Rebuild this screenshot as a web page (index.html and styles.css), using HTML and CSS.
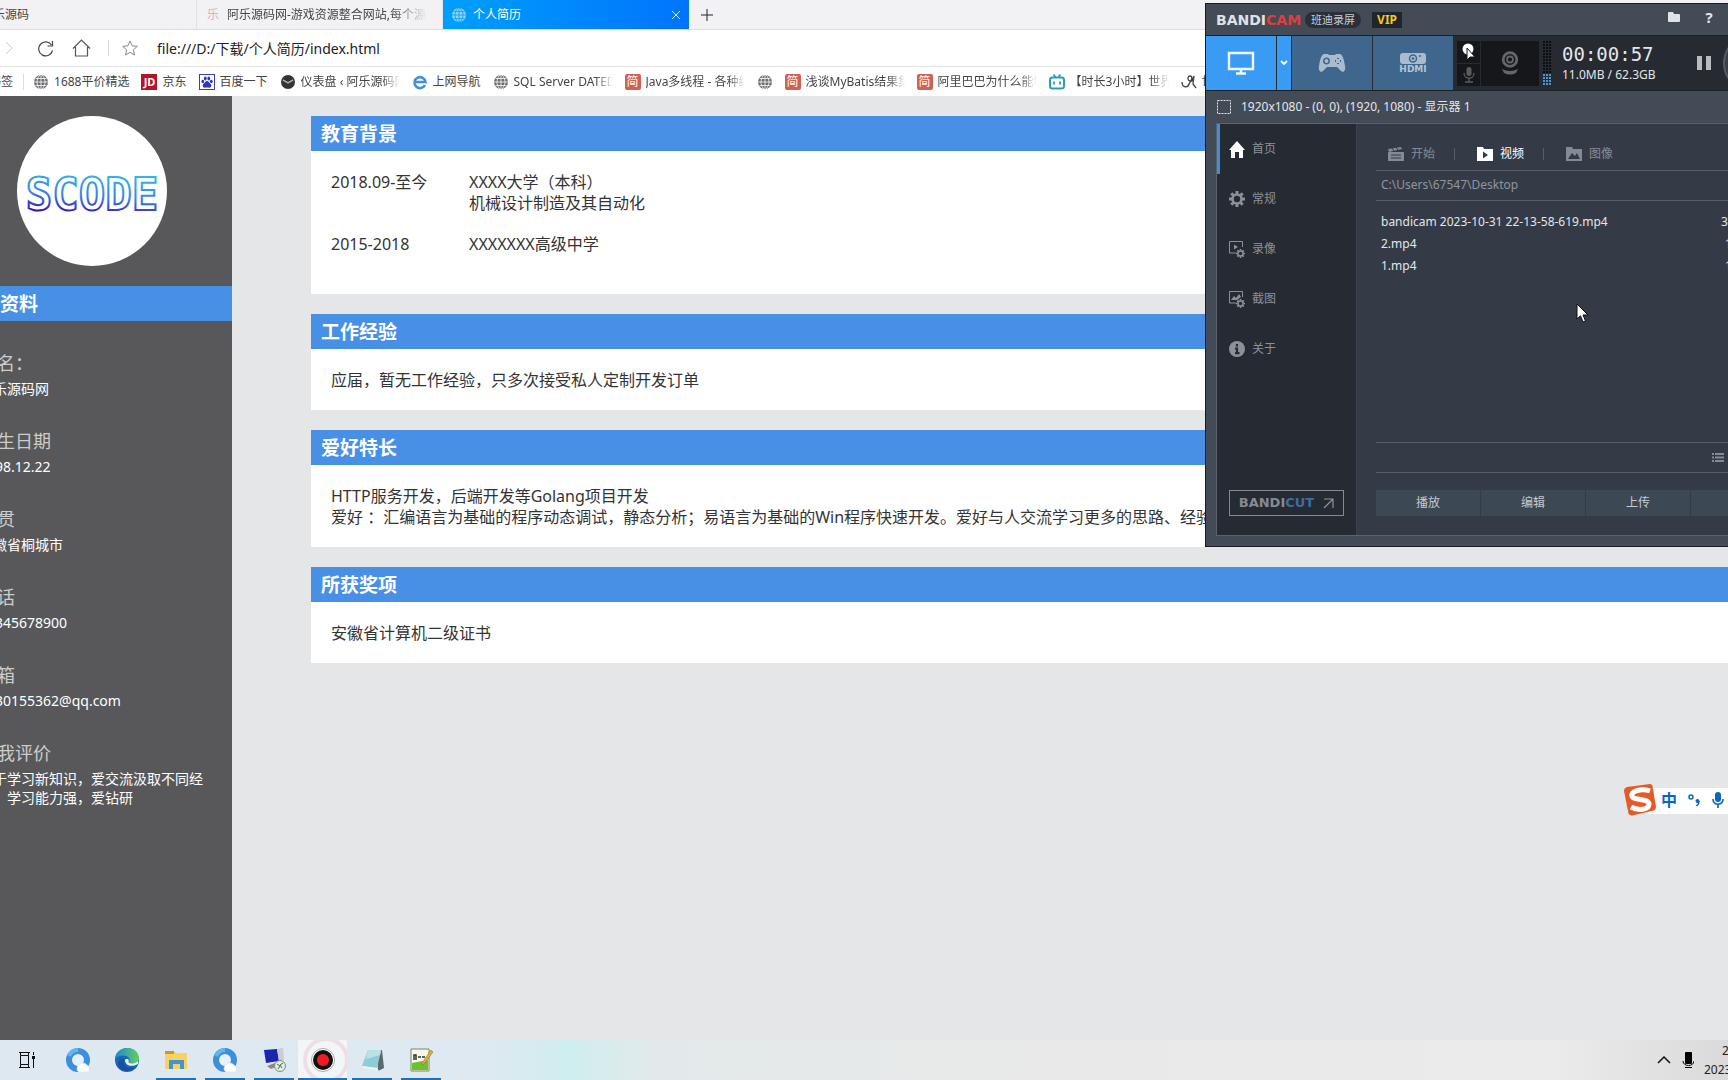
FILE: index.html
```html
<!DOCTYPE html>
<html lang="zh-CN">
<head>
<meta charset="utf-8">
<title>个人简历</title>
<link rel="stylesheet" href="styles.css">
</head>
<body>
<svg class="defs" width="0" height="0" aria-hidden="true">
  <defs>
    <symbol id="globe" viewBox="0 0 16 16"><circle cx="8" cy="8" r="7" fill="currentColor"/><path d="M8 1v14M1 8h14M2.500 4.500h11M2.500 11.500h11M7 1c-4 4-4 10 0 14M9 1c4 4 4 10 0 14" fill="none" stroke="var(--line,#fff)" stroke-width=".8"/></symbol>
    <symbol id="qq" viewBox="0 0 24 24"><circle cx="12" cy="12" r="9" fill="#e8f1fa" stroke="#3c8fdc" stroke-width="6"/><path d="M3 8a10 10 0 0 1 9-6" stroke="#62b6f2" stroke-width="4" fill="none"/><path d="M13 24a4 4 0 0 1 0-7 5 5 0 0 1 8 0 4 4 0 0 1 1 7z" fill="#fff" stroke="#cfe0f0" stroke-width=".6"/></symbol>
    <symbol id="gear" viewBox="0 0 16 16"><circle cx="8" cy="8" r="4.500" fill="none" stroke="currentColor" stroke-width="2.600"/><path d="M8 0v3M8 13v3M0 8h3M13 8h3M2.300 2.300l2.200 2.200M11.500 11.500l2.200 2.200M13.700 2.300l-2.200 2.200M4.500 11.500l-2.200 2.200" stroke="currentColor" stroke-width="3"/></symbol>
  </defs>
</svg>

<header class="browser">
  <nav class="tabs">
    <a class="tab" href="#"><span class="tab-icon"></span><span class="tab-title">阿乐源码</span></a>
    <a class="tab" href="#"><span class="tab-icon le">乐</span><span class="tab-title fade">阿乐源码网-游戏资源整合网站,每个源码</span></a>
    <a class="tab active" href="#"><svg class="tab-icon pale" width="16" height="16"><use href="#globe"/></svg><span class="tab-title">个人简历</span>
      <svg class="close" width="10" height="10" viewBox="0 0 10 10"><path d="M1 1l8 8M9 1l-8 8" stroke="#d8eeff" fill="none"/></svg></a>
    <button class="plain new-tab" aria-label="新建标签页"><svg width="12" height="12" viewBox="0 0 12 12"><path d="M6 0v12M0 6h12" stroke="#222"/></svg></button>
  </nav>
  <div class="address">
    <button class="plain nav-fwd" aria-label="前进"><svg width="9" height="14" viewBox="0 0 9 14"><path d="M1 1l6 6-6 6" fill="none" stroke="#ccc"/></svg></button>
    <button class="plain nav-reload" aria-label="刷新"><svg width="17" height="17" viewBox="0 0 17 17"><path d="M15.500 10.500A7 7 0 1 1 14.500 5" fill="none" stroke="#444" stroke-width="1.200"/><path d="M15.500 1v5h-5" fill="none" stroke="#444" stroke-width="1.200"/></svg></button>
    <button class="plain nav-home" aria-label="主页"><svg width="19" height="18" viewBox="0 0 19 18"><path d="M1 9.500L9.500 1 18 9.500M3.500 8v9h12V8" fill="none" stroke="#555" stroke-width="1.200"/></svg></button>
    <span class="rule"></span>
    <button class="plain nav-star" aria-label="收藏"><svg width="16" height="16" viewBox="0 0 16 16"><path d="M8 1l2.100 4.800 5.200.5-3.900 3.500 1.100 5.200L8 12.300 3.500 15l1.100-5.200L.7 6.300l5.200-.5z" fill="none" stroke="#888"/></svg></button>
    <input class="url" aria-label="地址" value="file:///D:/下载/个人简历/index.html">
  </div>
  <nav class="bookmarks">
    <a class="clipped" href="#">书签</a><span class="rule"></span>
    <a href="#"><svg class="grey" width="16" height="16"><use href="#globe"/></svg><span>1688平价精选</span></a>
    <a href="#"><span class="jd">JD</span><span>京东</span></a>
    <a href="#"><svg width="16" height="16" viewBox="0 0 16 16"><rect x=".5" y=".5" width="15" height="15" fill="#fff" stroke="#3a3fb8"/><g fill="#2e35c4"><ellipse cx="3.800" cy="7.500" rx="1.400" ry="1.800"/><ellipse cx="6.300" cy="4.500" rx="1.400" ry="1.900"/><ellipse cx="9.800" cy="4.500" rx="1.400" ry="1.900"/><ellipse cx="12.300" cy="7.500" rx="1.400" ry="1.800"/><path d="M8 7c1.500 0 2 1.500 3.200 2.500 2 1.800 1 4.500-1.200 4.200-1.300-.3-2.700-.3-4 0-2.200.3-3.200-2.400-1.200-4.200C6 8.500 6.500 7 8 7z"/></g></svg><span>百度一下</span></a>
    <a href="#"><svg width="16" height="16" viewBox="0 0 16 16"><circle cx="8" cy="8" r="7" fill="#333"/><path d="M3 6l5 3 5-3" stroke="#aaa" stroke-width="1.500" fill="none"/></svg><span class="fade">仪表盘 ‹ 阿乐源码网站</span></a>
    <a href="#"><svg width="16" height="16" viewBox="0 0 16 16"><path d="M13 11a5.500 5.500 0 1 1 .5-3H4" fill="none" stroke="#3f92d8" stroke-width="2.600"/></svg><span>上网导航</span></a>
    <a href="#"><svg class="grey" width="16" height="16"><use href="#globe"/></svg><span class="fade">SQL Server DATEDIFF</span></a>
    <a href="#"><span class="jian">简</span><span class="fade">Java多线程 - 各种线程</span></a>
    <a href="#" aria-label="书签"><svg class="grey" width="16" height="16"><use href="#globe"/></svg></a>
    <a href="#"><span class="jian">简</span><span class="fade">浅谈MyBatis结果集映射</span></a>
    <a href="#"><span class="jian">简</span><span class="fade">阿里巴巴为什么能够</span></a>
    <a href="#"><svg width="16" height="16" viewBox="0 0 16 16"><rect x="1" y="3.500" width="14" height="11" rx="2.500" fill="none" stroke="#2a9fb5" stroke-width="2"/><path d="M4.500.5l2 2.500M11.500.5l-2 2.500M5 7.500v3M11 7.500v3" stroke="#2a9fb5" stroke-width="1.800"/></svg><span class="fade">【时长3小时】世界上最</span></a>
    <a href="#"><svg width="16" height="16" viewBox="0 0 16 16"><path d="M1 8c0 6 6 6 7 2 3-4 4-8 1-8s-3 6 2 5l2-5-1 8 3 4" fill="none" stroke="#444" stroke-width="1.300"/></svg><span class="fade">世界</span></a>
  </nav>
</header>

<div class="page">
  <aside class="profile">
    <svg class="avatar" width="150" height="150" viewBox="0 0 150 150" role="img" aria-label="SCODE">
      <defs><linearGradient id="ink" x1=".6" y1="0" x2=".4" y2="1"><stop offset=".1" stop-color="#2fb8ee"/><stop offset=".55" stop-color="#3a7fe0"/><stop offset=".9" stop-color="#3212b8"/></linearGradient></defs>
      <circle cx="75" cy="75" r="75" fill="#fff"/>
      <text class="scode" x="75" y="94" text-anchor="middle" fill="#fff" stroke="url(#ink)" stroke-width="2">SCODE</text>
    </svg>
    <h3>个人资料</h3>
    <dl>
      <dt>姓名：</dt><dd>阿乐源码网</dd>
      <dt>出生日期</dt><dd>1998.12.22</dd>
      <dt>籍贯</dt><dd>安徽省桐城市</dd>
      <dt>电话</dt><dd>12345678900</dd>
      <dt>邮箱</dt><dd>2330155362@qq.com</dd>
      <dt>自我评价</dt><dd>善于学习新知识，爱交流汲取不同经<br>验，学习能力强，爱钻研</dd>
    </dl>
  </aside>
  <main class="resume">
    <section><h3>教育背景</h3>
      <div class="card-body schools">
        <span>2018.09-至今</span><p>XXXX大学（本科）<br>机械设计制造及其自动化</p>
        <span>2015-2018</span><p>XXXXXXX高级中学</p>
      </div></section>
    <section><h3>工作经验</h3><div class="card-body"><p>应届，暂无工作经验，只多次接受私人定制开发订单</p></div></section>
    <section><h3>爱好特长</h3><div class="card-body"><p>HTTP服务开发，后端开发等Golang项目开发<br>爱好 ：汇编语言为基础的程序动态调试，静态分析；易语言为基础的Win程序快速开发。爱好与人交流学习更多的思路、经验</p></div></section>
    <section><h3>所获奖项</h3><div class="card-body"><p>安徽省计算机二级证书</p></div></section>
  </main>
</div>

<footer class="taskbar">
  <button class="plain task-view" aria-label="任务视图"><svg width="18" height="16" viewBox="0 0 18 16"><path d="M1 .5h11M1 15.500h11M2.500 0v3.500h8V0M2.500 16v-3.500h8V16M2.500 3.500v9M10.500 3.500v9M15.500 0v3M15.500 7v9" fill="none" stroke="#111" stroke-width="1"/><rect x="14" y="4" width="3" height="3" fill="#111"/></svg></button>
  <button class="plain app" aria-label="QQ浏览器"><svg width="24" height="24"><use href="#qq"/></svg></button>
  <button class="plain app" aria-label="Edge"><svg width="24" height="24" viewBox="0 0 24 24"><defs><linearGradient id="edge"><stop stop-color="#1c86d6"/><stop offset="1" stop-color="#5fd35a"/></linearGradient></defs><circle cx="12" cy="12" r="12" fill="#1668b8"/><path d="M0 11C1-3 23-4 24 10c0 5-5 6-8 5-4-1 0-2-2-5-3-4-11-3-14 1z" fill="url(#edge)"/><path d="M9 11c-2 6 4 11 11 8-3 4-9 5-13 3-6-4-5-12 2-11z" fill="#1c4f9c"/><path d="M10 12c0 5 6 8 13 4V13c-2 2-6 3-8 2-3-1 0-2-2-4-2 0-3 0-3 1z" fill="#e6f1f6"/></svg></button>
  <button class="plain app open" aria-label="文件资源管理器"><svg width="24" height="24" viewBox="0 0 24 24"><path d="M1 3h9l2 2h11v16H1z" fill="#f8d262"/><path d="M1 3h9v3H1z" fill="#c69a2c"/><path d="M5 21v-9h15v9h-4v-5H9v5z" fill="#4394d2"/></svg></button>
  <button class="plain app open" aria-label="QQ浏览器"><svg width="24" height="24"><use href="#qq"/></svg></button>
  <button class="plain app open" aria-label="远程桌面"><svg width="24" height="24" viewBox="0 0 24 24"><path d="M2 2l13-1 2 12-13 2z" fill="#1a25b0"/><path d="M15 1l6-1 1 12-5 1z" fill="#c9cdd6"/><path d="M5 18l8-3 3 3-7 3z" fill="#888"/><circle cx="18" cy="18" r="5.500" fill="#e5ebe3" stroke="#7f8b80"/><path d="M15 16l3 2-2 3M21 15l-3 2 2 3" fill="none" stroke="#397a45"/></svg></button>
  <button class="plain app open current" aria-label="Bandicam"><svg width="48" height="48" viewBox="0 0 48 48"><circle cx="27" cy="24" r="21" fill="none" stroke="#e9a9b2" stroke-width="4" opacity=".3"/><circle cx="24" cy="24" r="11.500" fill="#fff" stroke="#aaa"/><circle cx="24" cy="24" r="10" fill="#111"/><circle cx="24" cy="24" r="6" fill="#ee1c25"/></svg></button>
  <button class="plain app open" aria-label="记事本"><svg width="24" height="24" viewBox="0 0 24 24"><path d="M17 4l5-2 2 18-6 3z" fill="#59696e"/><path d="M8 2l13 1-4 17-15-2z" fill="#8fccd6"/><path d="M8 2l13 1-1 4-14 4z" fill="#b9e2e8"/><path d="M2 18l15 2 2 3-16-3z" fill="#e9f3f4"/></svg></button>
  <button class="plain app open" aria-label="Notepad++"><svg width="24" height="24" viewBox="0 0 24 24"><path d="M2 1h18v22H2z" fill="#f6f7ea" stroke="#7b8a50"/><path d="M3 15l16-3v10H3z" fill="#6cc132"/><path d="M5 12V7h2v5M9 9h3M13 9h3" stroke="#333" stroke-width="1.500" fill="none"/><path d="M22 2l2 2-9 12-2 1v-2z" fill="#e2ad35" stroke="#8b6a28" stroke-width=".5"/></svg></button>
  <div class="tray">
    <svg width="14" height="8" viewBox="0 0 14 8"><path d="M1 7l6-6 6 6" fill="none" stroke="#111" stroke-width="1.500"/></svg>
    <svg width="12" height="16" viewBox="0 0 12 16"><rect x="3" width="7" height="12" rx="1" fill="#000"/><path d="M1 9c0 6 11 6 11 0M3 15.500h7" fill="none" stroke="#000"/></svg>
    <div class="clock"><span>2</span><span>2023</span></div>
  </div>
</footer>

<section class="recorder" aria-label="Bandicam">
  <header class="rec-title">
    <strong class="brand">BANDI<em>CAM</em></strong><span class="pill">班迪录屏</span><span class="vip">VIP</span>
    <button class="plain rec-folder" aria-label="打开文件夹"><svg width="12" height="10" viewBox="0 0 12 10"><path d="M0 1q0-1 1-1h4l1 2h5q1 0 1 1v6q0 1-1 1H1q-1 0-1-1z" fill="#dfe3e8"/></svg></button>
    <button class="plain rec-help">?</button>
  </header>
  <div class="rec-tools">
    <button class="plain mode on wide-a" aria-label="屏幕"><svg width="28" height="24" viewBox="0 0 28 24"><path d="M2 2h24v16H2z" fill="none" stroke="#f2fbff" stroke-width="2.400"/><path d="M14 18v4M9 22.500h10" stroke="#f2fbff" stroke-width="2.500"/></svg></button>
    <button class="plain mode on narrow" aria-label="更多"><svg width="8" height="6" viewBox="0 0 8 6"><path d="M1 1l3 3 3-3" fill="none" stroke="#fff" stroke-width="1.800"/></svg></button>
    <button class="plain mode" aria-label="游戏"><svg width="28" height="20" viewBox="0 0 28 20"><path d="M6 1h4l1 1h6l1-1h4c3 1 4 6 5 12 1 5-2 7-4 5l-4-4H9l-4 4c-2 2-5 0-4-5C2 7 3 2 6 1z" fill="#a9bccd"/><circle cx="8.500" cy="8" r="2.700" fill="none" stroke="#3f678d" stroke-width="1.500"/><path d="M20 5v1M20 10v1M17 8h1M22 8h1" stroke="#3f678d" stroke-width="2"/></svg></button>
    <button class="plain mode hdmi"><svg width="26" height="12" viewBox="0 0 26 12"><rect width="26" height="11" rx="3" fill="#a9bccd"/><circle cx="13" cy="5.500" r="3.500" fill="none" stroke="#3f678d" stroke-width="1.500"/><circle cx="13" cy="5.500" r="1.300" fill="#3f678d"/><circle cx="20" cy="3" r="1" fill="#3f678d"/></svg><span>HDMI</span></button>
    <div class="mini">
      <button class="plain" aria-label="鼠标"><svg width="14" height="18" viewBox="0 0 14 18"><circle cx="6" cy="6" r="5.500" fill="#fff"/><path d="M5 5v12l3-3h5z" fill="#fff" stroke="#15171a"/></svg></button>
      <button class="plain" aria-label="麦克风"><svg width="12" height="16" viewBox="0 0 12 16"><rect x="3.500" width="5" height="9" rx="2.500" fill="#5a5d61"/><path d="M1 6c0 7 10 7 10 0M6 11v4M2 15h8" fill="none" stroke="#5a5d61" stroke-width="1.300"/></svg></button>
    </div>
    <button class="plain webcam" aria-label="摄像头"><svg width="18" height="24" viewBox="0 0 18 24"><circle cx="9" cy="8.500" r="6.800" fill="none" stroke="#63666a" stroke-width="2.800"/><circle cx="9" cy="8.500" r="3" fill="none" stroke="#63666a" stroke-width="1.800"/><path d="M1 18q8 4 16 0l-2 4q-6 3-12 0z" fill="#63666a"/></svg></button>
    <div class="meter"></div>
    <div class="times"><time>00:00:57</time><span>11.0MB / 62.3GB</span></div>
    <button class="plain pause" aria-label="暂停"><svg width="14" height="14" viewBox="0 0 14 14"><path d="M0 0h5v14H0zM9 0h5v14H9z" fill="#b9bdc2"/></svg></button>
    <svg class="stop" width="6" height="44" viewBox="0 0 6 44"><circle cx="30" cy="22" r="28" fill="#3a3e45" stroke="#555b64" stroke-width="2"/></svg>
  </div>
  <div class="rec-target"><svg width="14" height="14" viewBox="0 0 14 14"><path d="M.5.5h13v13H.5z" fill="none" stroke="#e3e6ea" stroke-dasharray="2 1"/></svg><span>1920x1080 - (0, 0), (1920, 1080) - 显示器 1</span></div>
  <div class="rec-body">
    <nav class="rec-nav">
      <a class="on" href="#"><svg width="16" height="17" viewBox="0 0 16 17"><path d="M8 0l8 9h-2v8h-4v-6H6v6H2V9H0z" fill="#fff"/></svg>首页</a>
      <a href="#"><svg width="16" height="16"><use href="#gear"/></svg>常规</a>
      <a href="#"><svg width="16" height="17" viewBox="0 0 16 17"><path d="M7 12H.5V.5h13V6" fill="none" stroke="currentColor"/><path d="M5 3.500v5L9 6z" fill="currentColor"/><svg x="7" y="8" width="9" height="9"><use href="#gear"/></svg></svg>录像</a>
      <a href="#"><svg width="16" height="17" viewBox="0 0 16 17"><path d="M7 12H.5V.5h13V6" fill="none" stroke="currentColor"/><path d="M2 9l3-4 2 2 3-4 2 3-4 3z" fill="currentColor"/><svg x="7" y="8" width="9" height="9"><use href="#gear"/></svg></svg>截图</a>
      <a href="#"><svg width="16" height="16" viewBox="0 0 16 16"><circle cx="8" cy="8" r="8" fill="currentColor"/><path d="M8 3v2.500M6 7.500h2V12M6 12.200h4.500" fill="none" stroke="#262a33" stroke-width="2.200"/></svg>关于</a>
      <button class="bandicut"><strong>BANDI<em>CUT</em></strong><svg width="11" height="11" viewBox="0 0 11 11"><path d="M1 1h9v9M10 1L1 10" fill="none" stroke="#8f959d" stroke-width="1.200"/></svg></button>
    </nav>
    <div class="rec-main">
      <div class="rec-tabs">
        <button class="plain"><svg width="16" height="14" viewBox="0 0 16 14"><path d="M0 5h16v9H0zM0 2l13-2 1 2-13 3z" fill="currentColor"/><path d="M3 8h10M3 11h10M4 1l2 3M8 0l2 3" stroke="#343b46"/></svg>开始</button>
        <button class="plain on"><svg width="16" height="14" viewBox="0 0 16 14"><path d="M0 0h6l1 2h9v12H0z" fill="currentColor"/><path d="M6 4.500v7L11 8z" fill="#343b46"/></svg>视频</button>
        <button class="plain"><svg width="16" height="14" viewBox="0 0 16 14"><path d="M0 0h6l1 2h9v12H0z" fill="currentColor"/><path d="M2 12l4-6 3 3 2-3 3 6z" fill="#343b46"/></svg>图像</button>
      </div>
      <div class="rec-path">C:\Users\67547\Desktop</div>
      <table class="files">
        <tr><td>bandicam 2023-10-31 22-13-58-619.mp4</td><td>3</td></tr>
        <tr><td>2.mp4</td><td class="in">1</td></tr>
        <tr><td>1.mp4</td><td class="in">1</td></tr>
      </table>
      <div class="rec-list"><svg width="12" height="9" viewBox="0 0 12 9"><path d="M0 1h2M0 4.500h2M0 8h2M3 1h9M3 4.500h9M3 8h9" stroke="#858b94" stroke-width="2"/></svg></div>
      <div class="rec-actions"><button>播放</button><button>编辑</button><button>上传</button><button aria-label="删除"></button></div>
    </div>
  </div>
</section>

<svg class="cursor" width="13" height="20" viewBox="0 0 13 20"><path d="M1 1v15l3.500-3.200L7 19l2.500-1-2.500-6H12z" fill="#fff" stroke="#111"/></svg>

<div class="ime">
  <svg width="32" height="32" viewBox="0 0 32 32"><path d="M3 3L26 0q2 0 2.500 2L32 23q0 3-2 3.500L8 31.500q-3 0-3.500-2L0 7q0-3 3-4z" fill="#e65a28"/><path d="M26 7C17 4 7 7 8 12s17 2 17 8-11 7-18 3" fill="none" stroke="#fff" stroke-width="5"/></svg>
  <span>中</span>
  <svg width="12" height="12" viewBox="0 0 12 12"><circle cx="3" cy="3" r="2" fill="none" stroke="#0b66c3" stroke-width="1.500"/><circle cx="9.500" cy="7" r="2" fill="#0b66c3"/><path d="M11 7q0 4-3 5" stroke="#0b66c3" fill="none" stroke-width="1.500"/></svg>
  <svg width="12" height="16" viewBox="0 0 12 16"><rect x="3" width="6" height="10" rx="3" fill="#0b66c3"/><path d="M1 7c0 7 10 7 10 0M6 12v4" fill="none" stroke="#0b66c3" stroke-width="1.700"/></svg>
</div>
</body>
</html>
```
FILE: styles.css
```css
* { box-sizing: border-box; }
body {
  margin: 0;
  min-height: 100vh;
  position: relative;
  display: flex;
  flex-direction: column;
  overflow: hidden;
  background: #e5e6e8;
  color: #333;
  font: 12px/16px "Noto Sans", "Noto Sans CJK SC", sans-serif;
  white-space: nowrap;
}
h3, p, dl, dd { margin: 0; }
em { font-style: normal; }
a { color: inherit; text-decoration: none; }
svg { display: block; flex: none; }
button { font: inherit; color: inherit; cursor: pointer; }
.defs { position: absolute; }
.plain { border: 0; padding: 0; background: none; display: flex; align-items: center; justify-content: center; }
.rule { width: 1px; height: 16px; background: #ddd; flex: none; }
.fade { overflow: hidden; -webkit-mask-image: linear-gradient(90deg, #000 82%, transparent); mask-image: linear-gradient(90deg, #000 82%, transparent); }

/* browser chrome */
.browser { background: #fff; overflow: hidden; flex: none; }
.tabs { display: flex; height: 30px; margin-left: -49px; background: #f2f2f5; border-bottom: 1px solid #dcdde0; }
.tab { display: flex; align-items: center; width: 246px; padding: 0 15px 0 8px; gap: 6px; border-right: 1px solid #e2e2e5; color: #444; }
.tab-icon { width: 16px; text-align: center; flex: none; }
.le { color: #eba9b8; }
.active { background: linear-gradient(90deg, #009ffc, #0074fc); color: #fff; border: 0; padding-right: 8px; }
.pale { color: #8fd3f5; --line: #0a9cf8; }
.close { margin-left: auto; }
.new-tab { width: 36px; }
.address { display: flex; align-items: center; height: 37px; border-bottom: 1px solid #e3e3e3; padding-left: 5px; }
.nav-reload { margin-left: 23px; }
.nav-home { margin-left: 18px; }
.address .rule { margin: 0 13px 0 17px; }
.url { flex: 1; margin-left: 19px; padding: 1px 0 0; border: 0; outline: 0; background: none; color: #222; font: 14px/20px "Noto Sans", "Noto Sans CJK SC", sans-serif; }
.bookmarks { display: flex; align-items: center; gap: 12px; height: 29px; padding-left: 32px; color: #444; }
.bookmarks a { display: flex; align-items: center; gap: 5px; flex: none; }
.bookmarks .clipped { margin-left: -43px; }
.bookmarks .rule { margin: 0 -3px 0 -2px; }
.bookmarks .fade { max-width: 99px; }
.grey { color: #6b6d70; }
.jd, .jian { width: 16px; height: 16px; text-align: center; color: #fff; }
.jd { background: #b3142c; font-size: 11px; font-weight: bold; }
.jian { background: #d2614f; border-radius: 2px; }

/* résumé */
.page { display: flex; flex: 1; min-height: 0; }
.profile { width: 280px; margin-left: -48px; flex: none; padding-top: 20px; background: #58585a; color: #fff; }
.avatar { margin: 0 auto 20px; }
.scode { font: bold 44px "DejaVu Sans Mono", monospace; }
h3 { padding: 2px 10px 0; background: #488fe6; color: #fff; font-size: 19px; line-height: 33px; }
.profile dl { padding: 28px 27px; }
.profile dt { font-size: 18px; line-height: 28px; padding-bottom: 2px; color: #ccc; }
.profile dd { font-size: 14px; line-height: 19px; padding-bottom: 29px; }
.resume { flex: 1; min-width: 0; padding: 20px 0 0 79px; display: flex; flex-direction: column; gap: 20px; overflow: hidden; }
.card-body { padding: 21px 20px 19px; background: #fff; font-size: 16px; line-height: 21px; }
.schools { display: grid; grid-template-columns: 138px 1fr; row-gap: 20px; padding-bottom: 39px; }

/* taskbar */
.taskbar { display: flex; height: 40px; flex: none; overflow: hidden; background: linear-gradient(90deg, #dde8f1 0, #dfe9f1 28%, #cfeeee 33%, #e3e9eb 38%, #e9e9e9 60%, #ebebeb 90%, #dadada 100%); }
.task-view { width: 53px; }
.app { width: 49px; border-bottom: 1px solid transparent; position: relative; }
.open::after { content: ""; position: absolute; left: 5px; right: 4px; bottom: -1px; height: 2px; background: #1673bd; }
.current { background: #f3f6f9; }
.current::after { left: 0; right: 0; }
.tray { margin-left: auto; display: flex; align-items: center; gap: 11px; color: #222; }
.clock { width: 24px; display: flex; flex-direction: column; gap: 3px; margin-left: -1px; }
.clock span:first-child { padding-left: 18px; }

/* recorder window */
.recorder { position: absolute; top: 3px; right: 0; width: 523px; height: 544px; display: flex; flex-direction: column; overflow: hidden; background: #434b57; border: 1px solid #171a20; border-right: 0; color: #e3e6ea; }
.rec-title { display: flex; align-items: center; height: 31px; padding-left: 10px; flex: none; }
.brand { font: bold 14px/16px "DejaVu Sans", sans-serif; color: #dfe2e6; }
.brand em { color: #e23c41; }
.pill { margin-left: 4px; padding: 0 6px; border-radius: 8px; background: #2b3038; color: #c8ccd2; font-size: 11px; }
.vip { margin-left: 11px; padding: 0 5px; background: #20242b; color: #f7c81e; font: bold 12px/16px "Noto Sans", sans-serif; }
.rec-folder { margin-left: auto; padding-bottom: 6px; }
.rec-help { width: 48px; padding: 0 8px 6px 18px; font-size: 15px; font-weight: bold; }
.rec-tools { display: flex; align-items: center; height: 56px; flex: none; background: #262a31; border: solid #1b1f26; border-width: 1px 0; gap: 1px; }
.mode { width: 80px; height: 54px; background: #3f678d; }
.on.mode { background: #3a9bf4; }
.mode.wide-a { width: 70px; }
.mode.narrow { width: 14px; }
.hdmi { flex-direction: column; color: #b4c5d4; font: bold 9px/9px "DejaVu Sans", sans-serif; }
.mini { display: flex; flex-direction: column; gap: 1px; width: 23px; margin-left: 3px; }
.mini button { height: 22px; background: #15171a; }
.webcam { width: 58px; height: 45px; background: #15171a; }
.meter { width: 9px; height: 45px; margin: 0 9px 0 3px; background: repeating-linear-gradient(90deg, transparent 0 2px, #262a31 2px 3px), repeating-linear-gradient(transparent 0 2px, #262a31 2px 3px), linear-gradient(#0d0f12 73%, #4a96dc 73%); }
.times { display: flex; flex-direction: column; gap: 3px; width: 98px; }
.times time { font: 19px/20px "DejaVu Sans Mono", monospace; }
.pause { margin-left: auto; }
.stop { margin-left: 10px; }
.rec-target { display: flex; align-items: center; gap: 10px; height: 32px; padding-left: 11px; flex: none; }
.rec-body { flex: 1; min-height: 0; display: flex; margin: 0 0 10px 10px; border: solid #59626e; border-width: 1px 0 1px 1px; background: #343b46; }
.rec-nav { width: 140px; flex: none; display: flex; flex-direction: column; background: #262a33; color: #8c9199; border-right: 1px solid #3a414c; }
.rec-nav a { display: flex; align-items: center; gap: 7px; height: 50px; padding: 0 0 0 12px; }
.rec-nav .on { box-shadow: inset 3px 0 #3b8fdc; }
.bandicut { display: flex; align-items: center; justify-content: center; gap: 9px; width: 115px; height: 26px; margin: auto 0 19px 12px; padding: 0; border: 1px solid #858a92; background: none; }
.bandicut strong { font: bold 13px/16px "DejaVu Sans", sans-serif; color: #858a92; }
.bandicut em { color: #3b6da3; }
.rec-main { flex: 1; min-width: 0; display: flex; flex-direction: column; padding-left: 19px; }
.rec-tabs { display: flex; align-items: center; height: 47px; padding-top: 14px; border-bottom: 1px solid #565e69; color: #858b94; }
.rec-tabs button { width: 89px; height: 24px; gap: 7px; justify-content: flex-start; padding-left: 12px; background: linear-gradient(#565e69, #565e69) 78px 50% / 1px 12px no-repeat; }
.rec-tabs button:last-child { background: none; }
.rec-tabs .on { color: #fff; }
.rec-path { height: 30px; padding: 6px 5px; border-bottom: 1px solid #565e69; color: #9095a0; }
.files { width: 347px; margin: 10px 0 0 5px; border-collapse: collapse; table-layout: fixed; }
.files td { height: 22px; padding: 0; }
.files td:last-child { width: 7px; }
.files tr:first-child td:last-child { width: 7px; }
.files .in { text-indent: 4px; }
.rec-list { display: flex; align-items: center; justify-content: flex-end; height: 31px; margin-top: auto; padding-right: 4px; border: solid #565e69; border-width: 1px 0; }
.rec-actions { display: grid; grid-template-columns: 104px 104px 104px 104px; gap: 1px; padding: 17px 0 19px; }
.rec-actions button { height: 26px; padding: 0; border: 0; background: #3d4855; color: #c5cad1; }

/* floating items */
.cursor { position: absolute; right: 139px; top: 303px; }
.ime { position: absolute; right: 0; top: 783px; display: flex; align-items: center; gap: 12px; height: 34px; padding-right: 4px; color: #0b66c3; background: linear-gradient(#fff, #fff) 24px 5px / 100% 26px no-repeat; }
.ime span { font-size: 16px; line-height: 20px; font-weight: bold; margin: 0 -1px 0 -7px; }
```
